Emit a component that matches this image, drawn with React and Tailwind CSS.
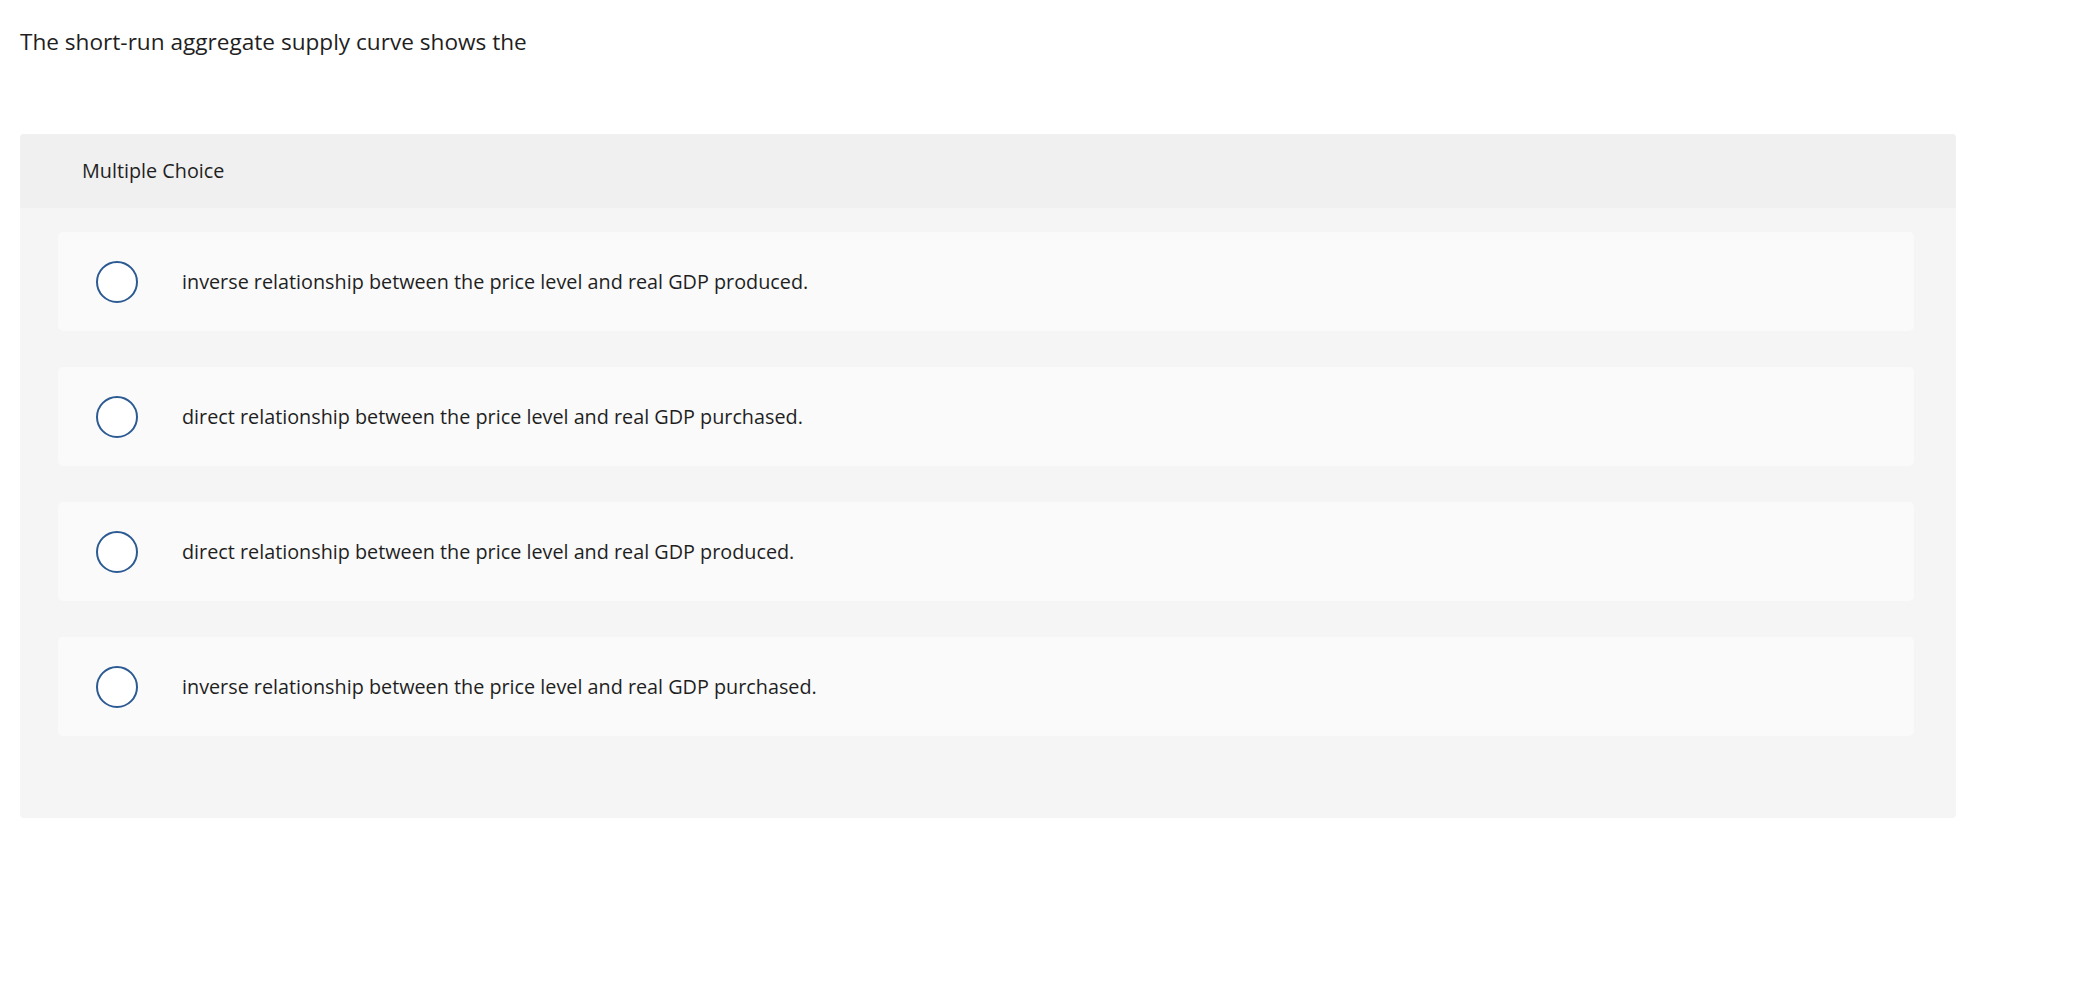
import React, { useState } from "react";

const choices = [
    "inverse relationship between the price level and real GDP produced.",
    "direct relationship between the price level and real GDP purchased.",
    "direct relationship between the price level and real GDP produced.",
    "inverse relationship between the price level and real GDP purchased.",
];

const App = () => {
    const [selected, setSelected] = useState(null);

    return (
        <div className="min-h-screen bg-white font-['Open_Sans','Liberation_Sans',sans-serif] text-[#1f1f1f]">
            {/* Question */}
            <div className="pl-[20px] pt-[27px] text-[22.6px] leading-[30px]">
                The short-run aggregate supply curve shows the
            </div>

            {/* Choice panel */}
            <div className="ml-[20px] mt-[77px] w-[1936px] rounded-[4px] bg-[#f5f5f5]">
                <div className="flex h-[74px] items-center rounded-t-[4px] bg-[#f0f0f0] pl-[62px] text-[19.8px]">
                    Multiple Choice
                </div>

                <div className="flex flex-col gap-[36px] pb-[82px] pl-[38px] pr-[42px] pt-[24px]">
                    {choices.map((text, i) => (
                        <label
                            key={i}
                            onClick={() => setSelected(i)}
                            className="flex h-[99px] cursor-pointer items-center rounded-[5px] bg-[#fafafa] pl-[38px]"
                        >
                            <span className="flex h-[42px] w-[42px] shrink-0 items-center justify-center rounded-full border-2 border-[#2c5a93] bg-white">
                                {selected === i && <span className="h-[22px] w-[22px] rounded-full bg-[#2c5a93]"></span>}
                            </span>
                            <span className="ml-[44px] text-[19.8px]">{text}</span>
                        </label>
                    ))}
                </div>
            </div>
        </div>
    );
};

export default App;
